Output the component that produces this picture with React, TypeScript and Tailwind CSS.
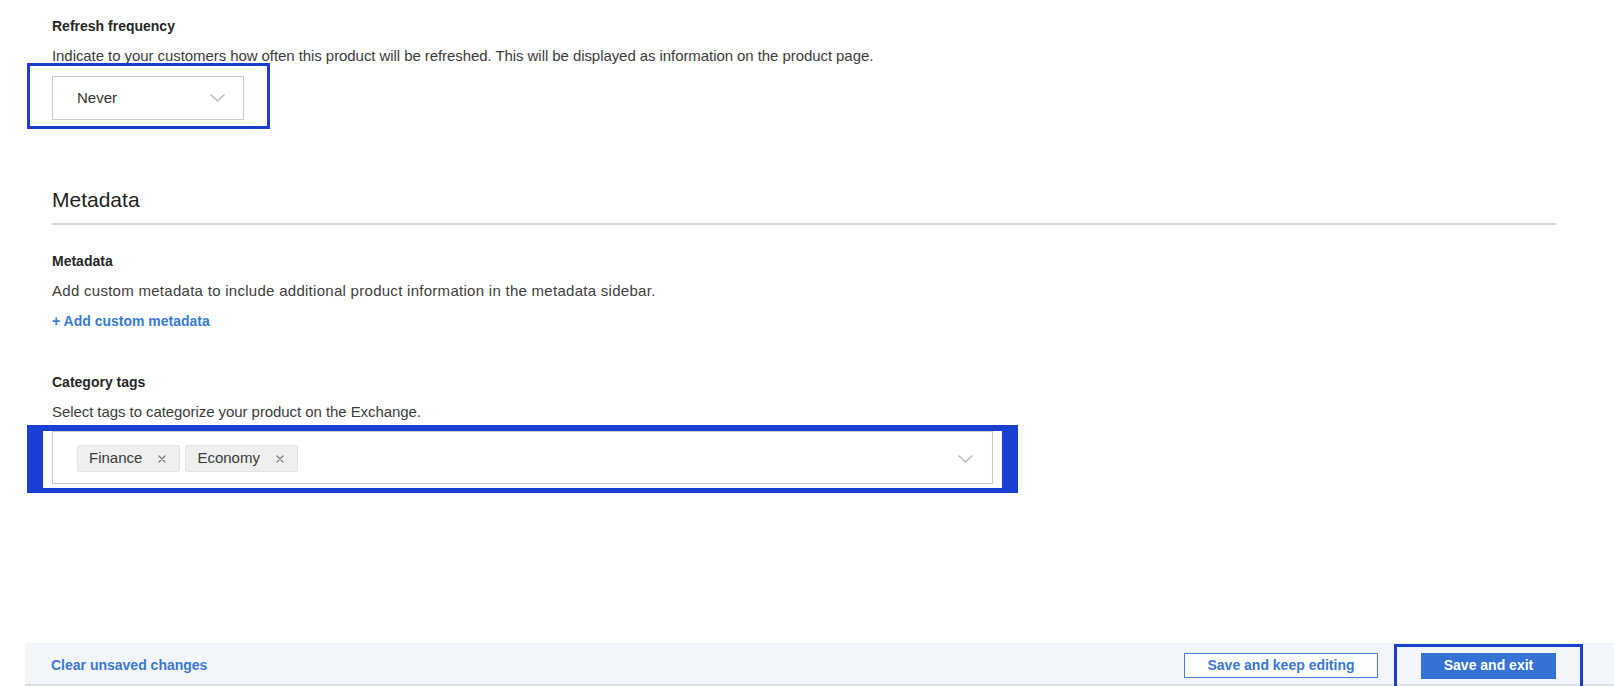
import React from "react";

function Chevron() {
  return (
    <svg width="15" height="8" viewBox="0 0 15 8" fill="none" className="shrink-0">
      <polyline points="1,1 7.5,7 14,1" stroke="#b8b8b8" strokeWidth="1.4" strokeLinecap="round" strokeLinejoin="round" />
    </svg>
  );
}

function Chip({ label }: { label: string }) {
  return (
    <div className="flex h-[27px] items-center gap-[16px] rounded-[2px] border border-[#e2e4e4] bg-[#eef0f0] pl-[11px] pr-[13px] text-[15px] text-[#3a3a3a]">
      <span>{label}</span>
      <svg width="8" height="8" viewBox="0 0 8 8" fill="none">
        <path d="M1 1L7 7M7 1L1 7" stroke="#7a7a7a" strokeWidth="1.3" strokeLinecap="round" />
      </svg>
    </div>
  );
}

export default function App() {
  return (
    <div className="flex h-[686px] flex-col overflow-hidden bg-white font-['Liberation_Sans',Arial,sans-serif]">
      <div className="pl-[52px] pr-[58px] pt-[16px]">
        <div className="text-[14px] font-bold leading-[20px] text-[#262626]">Refresh frequency</div>
        <div className="mt-[10px] text-[15px] leading-[20px] tracking-[-0.07px] text-[#3d3d3d]">
          Indicate to your customers how often this product will be refreshed. This will be displayed as information on the product page.
        </div>
        <div className="relative mt-[10px] w-[192px]">
          <div className="flex h-[44px] items-center justify-between border border-[#cccccc] bg-white pl-[24px] pr-[18px] text-[15px] text-[#333]">
            <span>Never</span>
            <Chevron />
          </div>
          <div className="pointer-events-none absolute -left-[25px] -right-[26px] -top-[13px] -bottom-[9px] border-[3px] border-[#1c3fd3]" />
        </div>

        <div className="mt-[66px] text-[21px] leading-[28px] text-[#1f1f1f]">Metadata</div>
        <div className="mt-[9px] h-[2px] bg-[#d8d8d8]" />

        <div className="mt-[26px] text-[14px] font-bold leading-[20px] text-[#262626]">Metadata</div>
        <div className="mt-[10px] text-[15px] leading-[20px] tracking-[0.28px] text-[#3d3d3d]">
          Add custom metadata to include additional product information in the metadata sidebar.
        </div>
        <div className="mt-[10px] text-[14px] font-bold leading-[20px] text-[#3b7bd6]">+ Add custom metadata</div>

        <div className="mt-[41px] text-[14px] font-bold leading-[20px] text-[#262626]">Category tags</div>
        <div className="mt-[10px] text-[15px] leading-[20px] tracking-[-0.07px] text-[#3d3d3d]">
          Select tags to categorize your product on the Exchange.
        </div>
        <div className="relative mt-[9px] w-[941px]">
          <div className="flex h-[53px] items-center justify-between border border-[#cccccc] bg-white pl-[24px] pr-[19px] pt-[2px]">
            <div className="flex items-center gap-[5px]">
              <Chip label="Finance" />
              <Chip label="Economy" />
            </div>
            <Chevron />
          </div>
          <div className="pointer-events-none absolute -left-[25px] -right-[25px] -top-[6px] -bottom-[9px] border-x-[16px] border-t-[6px] border-b-[5px] border-[#1c3fd3]" />
        </div>
      </div>

      <div className="mt-auto ml-[25px] flex h-[43px] items-center justify-between border-b-2 border-[#dde2e8] bg-[#f2f6fb] pl-[26px] pr-[58px] pt-[4px]">
        <span className="text-[14px] font-bold text-[#3b78d6]">Clear unsaved changes</span>
        <div className="flex items-center gap-[43px]">
          <button className="flex h-[25px] w-[194px] items-center justify-center border border-[#4a80d8] bg-white text-[14px] font-bold text-[#3b78d6]">
            Save and keep editing
          </button>
          <div className="relative">
            <button className="flex h-[26px] w-[135px] items-center justify-center bg-[#3572d6] text-[14px] font-bold text-white">
              Save and exit
            </button>
            <div className="pointer-events-none absolute -left-[27px] -right-[27px] -top-[9px] -bottom-[14px] border-[3px] border-[#1c3fd3]" />
          </div>
        </div>
      </div>
    </div>
  );
}
